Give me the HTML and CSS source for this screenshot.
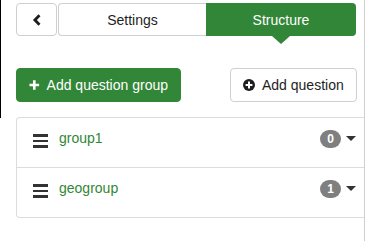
FILE: index.html
```html
<!DOCTYPE html>
<html>
<head>
<meta charset="utf-8">
<link rel="stylesheet" href="styles.css">
</head>
<body>
<div class="frame">
  <div class="edge"></div>
  <div class="panel">
    <div class="nav">
      <button class="back" aria-label="Back">
        <svg width="10" height="12" viewBox="0 0 10 12"><path d="M7.5 1.3 L2.9 6 L7.5 10.7" fill="none" stroke="#1e1e1e" stroke-width="2.8"/></svg>
      </button>
      <div class="tabs">
        <div class="tab">Settings</div>
        <div class="tab active">Structure</div>
      </div>
    </div>
    <div class="actions">
      <button class="btn primary">
        <svg width="12" height="12" viewBox="0 0 12 12"><path d="M6 0.5V11.5M0.5 6H11.5" stroke="#fff" stroke-width="3"/></svg>
        <span>Add question group</span>
      </button>
      <button class="btn outline">
        <svg width="12" height="12" viewBox="0 0 12 12"><circle cx="6" cy="6" r="6" fill="#1e1e1e"/><path d="M6 2.6V9.4M2.6 6H9.4" stroke="#fff" stroke-width="2"/></svg>
        <span>Add question</span>
      </button>
    </div>
    <div class="card">
      <div class="row">
        <span class="burger"><i></i><i></i><i></i></span>
        <span class="name">group1</span>
        <span class="badge">0</span>
        <span class="caret"></span>
      </div>
      <div class="row">
        <span class="burger"><i></i><i></i><i></i></span>
        <span class="name">geogroup</span>
        <span class="badge">1</span>
        <span class="caret"></span>
      </div>
    </div>
  </div>
</div>
</body>
</html>
```
FILE: styles.css
```css
html, body { margin: 0; padding: 0; background: #fff; }
body { font-family: "Liberation Sans", Arial, sans-serif; font-size: 14px; color: #1e1e1e; }
.frame { display: flex; align-items: flex-start; height: 241px; overflow: hidden; }
.edge { width: 1px; height: 118px; background: #000; flex: none; }
.panel { width: 340px; height: 241px; padding: 3px 8px 0 15px; border-right: 1px solid #cfcfcf; flex: none; }
.nav { display: flex; gap: 1px; height: 33px; }
.back { width: 41px; height: 33px; border: 1px solid #cfcfcf; border-radius: 4px; background: #fff; display: flex; align-items: center; justify-content: center; padding: 0; }
.tabs { display: flex; flex: 1; }
.tab { flex: none; height: 33px; box-sizing: border-box; display: flex; align-items: center; justify-content: center; position: relative; }
.tab:first-child { width: 148px; border: 1px solid #cfcfcf; border-right: none; border-radius: 4px 0 0 4px; }
.tab.active { width: 150px; background: #328637; color: #fff; border-radius: 0 4px 4px 0; }
.tab.active::after { content: ""; position: absolute; left: 50%; top: 33px; margin-left: -9px; border-left: 9px solid transparent; border-right: 9px solid transparent; border-top: 8px solid #328637; }
.actions { display: flex; justify-content: space-between; margin-top: 32px; }
.btn { flex: none; white-space: nowrap; height: 34px; border-radius: 4px; font-family: inherit; font-size: 14px; display: flex; align-items: center; gap: 7px; padding: 0 12px; box-sizing: border-box; }
.btn.primary { width: 165px; background: #328637; color: #fff; border: 1px solid #328637; }
.btn.outline { width: 127px; background: #fff; color: #1e1e1e; border: 1px solid #cfcfcf; margin-right: -1px; }
.card { margin-top: 15px; margin-right: -8px; border: 1px solid #dcdcdc; border-right: none; border-radius: 4px 0 0 4px; }
.row { height: 49px; display: flex; align-items: flex-start; padding: 12px 8px 0 16px; box-sizing: border-box; }
.row + .row { border-top: 1px solid #dcdcdc; height: 50px; }
.burger { width: 15px; display: flex; flex-direction: column; gap: 3px; margin-top: 4px; }
.burger i { display: block; height: 2.5px; background: #333; }
.name { margin-left: 11px; color: #328637; flex: 1; line-height: 17px; }
.badge { width: 21px; height: 18px; border-radius: 9px; background: #7f7f7f; color: #fff; font-weight: bold; font-size: 12px; display: flex; align-items: center; justify-content: center; }
.caret { margin-left: 5px; margin-top: 6px; border-left: 5px solid transparent; border-right: 5px solid transparent; border-top: 5px solid #333; }
```
